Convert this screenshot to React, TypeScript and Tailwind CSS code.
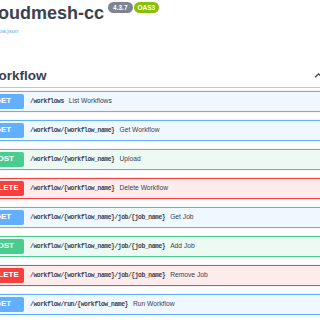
const ops = [
  { method: "GET", path: "/workflows", summary: "List Workflows" },
  { method: "GET", path: "/workflow/{workflow_name}", summary: "Get Workflow" },
  { method: "POST", path: "/workflow/{workflow_name}", summary: "Upload" },
  { method: "DELETE", path: "/workflow/{workflow_name}", summary: "Delete Workflow" },
  { method: "GET", path: "/workflow/{workflow_name}/job/{job_name}", summary: "Get Job" },
  { method: "POST", path: "/workflow/{workflow_name}/job/{job_name}", summary: "Add Job" },
  { method: "DELETE", path: "/workflow/{workflow_name}/job/{job_name}", summary: "Remove Job" },
  { method: "GET", path: "/workflow/run/{workflow_name}", summary: "Run Workflow" },
]

const styles: Record<string, { row: string; badge: string }> = {
  GET: { row: "bg-[#eff7ff] border-[#61affe]", badge: "bg-[#61affe]" },
  POST: { row: "bg-[#edfaf4] border-[#49cc90]", badge: "bg-[#49cc90]" },
  DELETE: { row: "bg-[#feecec] border-[#f93e3e]", badge: "bg-[#f93e3e]" },
}

export default function App() {
  return (
    <div className="w-[320px] h-[320px] overflow-hidden bg-white text-[#3b4151] font-['Liberation_Sans',Arial,sans-serif]">
      <div className="-ml-[20px] w-[350px]">
        {/* Info header */}
        <div className="flex items-start pl-[3px]">
          <h2 className="mt-[4px] text-[18px] leading-[18px] font-bold">cloudmesh-cc</h2>
          <div className="ml-[4px] mt-[2px] flex gap-[1px]">
            <span className="h-[11px] px-[5px] rounded-full bg-[#7d8492] text-white text-[6.5px] leading-[11px] font-bold">4.3.7</span>
            <span className="h-[11px] px-[4px] rounded-full bg-[#89bf04] text-white text-[6.5px] leading-[11px] font-bold">OAS3</span>
          </div>
        </div>
        <div className="mt-[6px] pl-[1px] text-[6px] leading-[6px] text-[#6fa6e8]">/workflow.json</div>

        {/* Tag section */}
        <div className="mt-[30px] h-[24px] flex items-center justify-between border-b border-[#3b4151]/30 pl-[6px]">
          <h3 className="text-[13.5px] leading-[16px] font-bold">Workflow</h3>
          <svg width="11" height="11" viewBox="0 0 20 20" className="mr-[6px] text-[#3b4151]">
            <path d="M4 13l6-6 6 6" fill="none" stroke="currentColor" strokeWidth="2.5" />
          </svg>
        </div>

        <div className="mt-[3px] flex flex-col gap-[8px]">
          {ops.map((op, i) => (
            <div
              key={i}
              className={`h-[21px] flex items-center border rounded-[2px] pl-[1px] shadow-[0_0_2px_rgba(0,0,0,0.15)] ${styles[op.method].row}`}
            >
              <span
                className={`w-[42px] h-[14.5px] shrink-0 rounded-[2px] text-white text-[8px] leading-[14.5px] font-bold text-center ${styles[op.method].badge}`}
              >
                {op.method}
              </span>
              <span className="ml-[6px] font-['Liberation_Mono',monospace] text-[6.3px] tracking-[-0.4px] font-bold whitespace-nowrap">
                {op.path}
              </span>
              <span className="ml-[5px] text-[6.7px] whitespace-nowrap">{op.summary}</span>
            </div>
          ))}
        </div>
      </div>
    </div>
  )
}
